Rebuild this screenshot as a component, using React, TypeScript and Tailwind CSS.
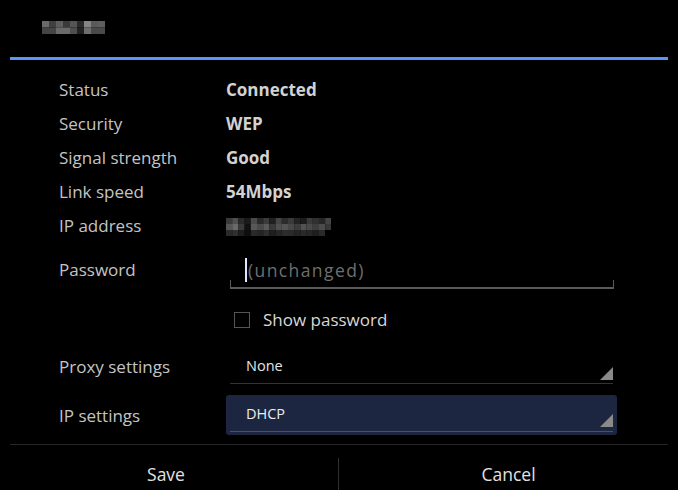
const titleBlocks = [
  ["#6b6b6b", "#404040", "#5e5e5e", "#3a3a3a", "#555555", "#2a2a2a", "#858585", "#5a5a5a", "#5e5e5e"],
  ["#454545", "#454545", "#6a6a6a", "#6a6a6a", "#4e4e4e", "#222222", "#6e6e6e", "#4a4a4a", "#4a4a4a"],
];

const ipBlocks = [
  ["#3a3a3a", "#505050", "#2a2a2a", "#1a1a1a", "#4a4a4a", "#2a2a2a", "#3c3c3c", "#202020", "#454545", "#2c2c2c", "#3a3a3a", "#242424", "#1c1c1c", "#3a3a3a", "#303030", "#262626", "#444444"],
  ["#555555", "#6a6a6a", "#3a3a3a", "#111111", "#585858", "#4a4a4a", "#5a5a5a", "#3a3a3a", "#505050", "#555555", "#484848", "#3c3c3c", "#525252", "#4a4a4a", "#3e3e3e", "#4c4c4c", "#383838"],
  ["#2a2a2a", "#303030", "#1e1e1e", "#0e0e0e", "#2a2a2a", "#242424", "#2e2e2e", "#1e1e1e", "#262626", "#2c2c2c", "#2a2a2a", "#242424", "#2a2a2a", "#262626", "#1e1e1e", "#2a2a2a", "#000000"],
];

const info = [
  { label: "Status", value: "Connected" },
  { label: "Security", value: "WEP" },
  { label: "Signal strength", value: "Good" },
  { label: "Link speed", value: "54Mbps" },
];

function Mosaic({ blocks, bw, bh }: { blocks: string[][]; bw: number; bh: number }) {
  const cols = blocks[0].length;
  return (
    <svg width={cols * bw} height={blocks.length * bh} className="block">
      {blocks.map((row, r) =>
        row.map((c, i) => <rect key={`${r}-${i}`} x={i * bw} y={r * bh} width={bw} height={bh} fill={c} />)
      )}
    </svg>
  );
}

function Corner() {
  return (
    <svg width="13" height="13" viewBox="0 0 13 13" className="block">
      <polygon points="0,13 13,0 13,13" fill="#8a8a8a" />
    </svg>
  );
}

export default function App() {
  return (
    <div className="relative h-[490px] w-[678px] overflow-hidden bg-black font-['Open_Sans',sans-serif] text-[17px] text-[#c4c4c4]">
      {/* title */}
      <div className="h-[57px] pl-[42px] pt-[21px]">
        <Mosaic blocks={titleBlocks} bw={7} bh={6.5} />
      </div>
      <div className="mx-[10px] h-[3px] bg-[#5d95f7]" />

      {/* details */}
      <div className="pl-[59px] pt-[13px]">
        {info.map((row) => (
          <div key={row.label} className="flex h-[34px] items-center">
            <div className="w-[167px]">{row.label}</div>
            <div className="font-bold text-[#d2d2d2]">{row.value}</div>
          </div>
        ))}
        <div className="flex h-[34px] items-center">
          <div className="w-[167px]">IP address</div>
          <div className="pt-[1px]">
            <Mosaic blocks={ipBlocks} bw={6.2} bh={6} />
          </div>
        </div>

        {/* password */}
        <div className="flex h-[52px] pt-[14px]">
          <div className="w-[171px]">Password</div>
          <div className="w-[384px]">
            <div className="flex items-center pl-[15px]">
              <div className="h-[24px] w-[2px] bg-[#dfe6ff]" />
              <span className="pl-[1px] text-[17.5px] tracking-[1.4px] text-[#6f6f6f]">(unchanged)</span>
            </div>
            <div className="mt-[-3px] h-[9px] border-x border-b-2 border-[#5a5a5a]" />
          </div>
        </div>

        {/* show password */}
        <div className="flex h-[50px] items-center pl-[175px]">
          <div className="h-[16px] w-[16px] border border-[#555555]" />
          <span className="pl-[13px] text-[#d8d8d8]">Show password</span>
        </div>

        {/* proxy */}
        <div className="flex h-[39px]">
          <div className="w-[171px] pt-[9px]">Proxy settings</div>
          <div className="w-[383px] border-b border-[#333333]">
            <div className="flex h-[37px] items-center justify-between pl-[16px]">
              <span className="pt-[5px] text-[14.5px] text-[#e6e6e6]">None</span>
              <div className="mt-[20px]">
                <Corner />
              </div>
            </div>
          </div>
        </div>

        {/* ip settings */}
        <div className="flex h-[51px] pt-[11px]">
          <div className="w-[167px] pt-[8px]">IP settings</div>
          <div className="h-[40px] w-[391px] rounded-[3px] bg-[#1c2640] px-[4px]">
            <div className="flex h-[37px] items-center justify-between border-b border-[#46516b] pl-[16px]">
              <span className="pt-[2px] text-[14.5px] text-[#ececec]">DHCP</span>
              <div className="mt-[14px]">
                <Corner />
              </div>
            </div>
          </div>
        </div>
      </div>

      {/* buttons */}
      <div className="absolute inset-x-0 bottom-0">
        <div className="mx-[10px] h-px bg-[#262626]" />
        <div className="flex h-[45px] items-end">
          <div className="flex h-[45px] w-[338px] items-center justify-center pr-[6px] pt-[13px] text-[17.5px] text-[#e2e2e2]">Save</div>
          <div className="h-[32px] w-px bg-[#2e2e2e]" />
          <div className="flex h-[45px] flex-1 items-center justify-center pt-[13px] text-[17.5px] text-[#e2e2e2]">Cancel</div>
        </div>
      </div>
    </div>
  );
}
